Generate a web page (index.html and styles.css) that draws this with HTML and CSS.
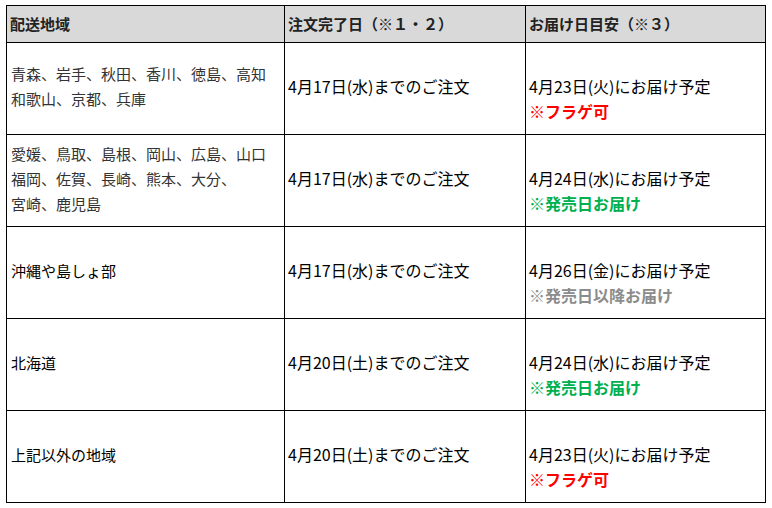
FILE: index.html
```html
<!DOCTYPE html>
<html lang="ja">
<head>
<meta charset="utf-8">
<title>配送地域とお届け日目安</title>
<link rel="stylesheet" href="styles.css">
</head>
<body>
<div class="sched">
  <div class="cell head">配送地域</div>
  <div class="cell head">注文完了日（※１・２）</div>
  <div class="cell head">お届け日目安（※３）</div>

  <div class="cell region soft">青森、岩手、秋田、香川、徳島、高知<br>和歌山、京都、兵庫</div>
  <div class="cell date">4月17日(水)までのご注文</div>
  <div class="cell date deliv">4月23日(火)にお届け予定<br><span class="note red">※フラゲ可</span></div>

  <div class="cell region soft">愛媛、鳥取、島根、岡山、広島、山口<br>福岡、佐賀、長崎、熊本、大分、<br>宮崎、鹿児島</div>
  <div class="cell date">4月17日(水)までのご注文</div>
  <div class="cell date deliv">4月24日(水)にお届け予定<br><span class="note green">※発売日お届け</span></div>

  <div class="cell region">沖縄や島しょ部</div>
  <div class="cell date">4月17日(水)までのご注文</div>
  <div class="cell date deliv">4月26日(金)にお届け予定<br><span class="note gray">※発売日以降お届け</span></div>

  <div class="cell region">北海道</div>
  <div class="cell date">4月20日(土)までのご注文</div>
  <div class="cell date deliv">4月24日(水)にお届け予定<br><span class="note green">※発売日お届け</span></div>

  <div class="cell region">上記以外の地域</div>
  <div class="cell date">4月20日(土)までのご注文</div>
  <div class="cell date deliv">4月23日(火)にお届け予定<br><span class="note red">※フラゲ可</span></div>
</div>
</body>
</html>
```
FILE: styles.css
```css
html, body {
  margin: 0;
  padding: 0;
  background: #ffffff;
}
body {
  padding: 5px 0 0 6px;
  font-family: "Noto Sans CJK JP", "Noto Sans", sans-serif;
  font-size: 15px;
  color: #000;
}
.sched {
  display: grid;
  grid-template-columns: 277px 240px 239px;
  grid-template-rows: 36px repeat(5, 91px);
  gap: 1px;
  padding: 1px;
  background: #000;
  width: max-content;
}
.cell {
  background: #fff;
  display: flex;
  flex-direction: column;
  justify-content: center;
  padding: 0 3px 5px 3px;
  line-height: 25px;
  white-space: nowrap;
}
.head {
  background: #d9d9d9;
  font-weight: bold;
  color: #222;
  padding-bottom: 2px;
}
.region {
  padding-left: 4px;
}
.soft {
  color: #333;
}
.date {
  font-size: 16px;
}
.deliv {
  padding-top: 26px;
}
.note {
  font-weight: bold;
}
.red { color: #ff0000; }
.green { color: #00b050; }
.gray { color: #8c8c8c; }
```
